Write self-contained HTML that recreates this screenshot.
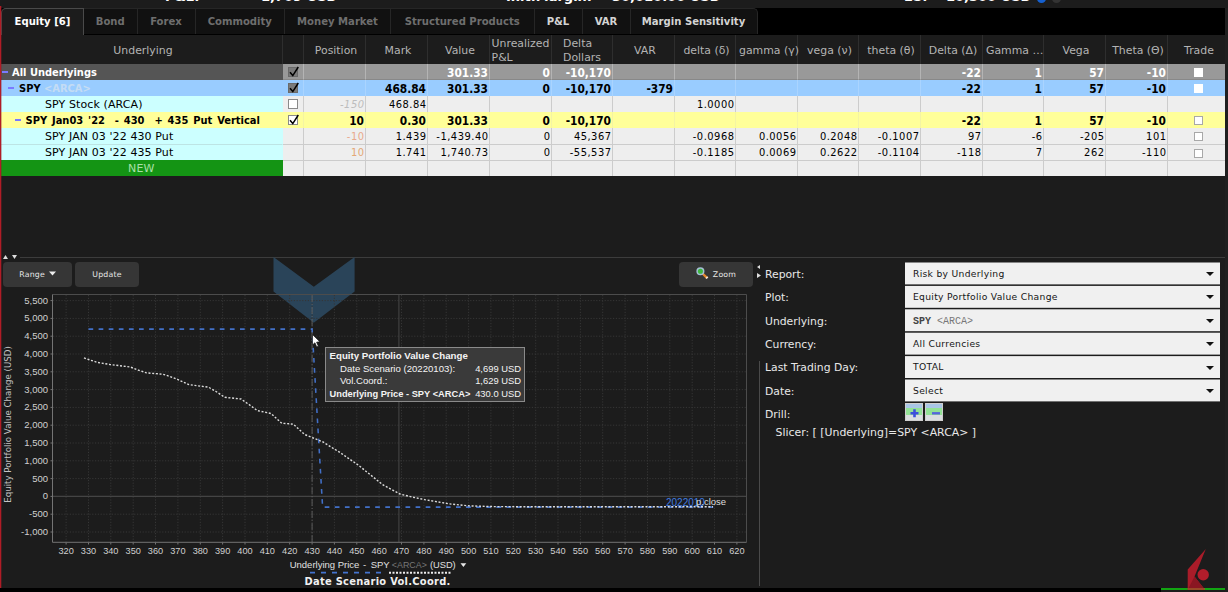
<!DOCTYPE html>
<html><head><meta charset="utf-8"><title>Risk Navigator</title>
<style>
html,body{margin:0;padding:0;background:#1c1c1c;}
body{width:1228px;height:592px;position:relative;overflow:hidden;font-family:"DejaVu Sans","Liberation Sans",sans-serif;font-size:11px;color:#fff;}
b,.bd{font-family:"DejaVu Sans Condensed","Liberation Sans",sans-serif;font-weight:bold;}
.n{font-family:"DejaVu Sans Condensed","Liberation Sans",sans-serif;}
.abs{position:absolute;}
#topstrip{left:0;top:0;width:1228px;height:8px;background:#1c1c1c;overflow:hidden;}
#topstrip span{position:absolute;top:-10px;font-weight:bold;font-size:13px;line-height:14px;color:#fff;white-space:pre;}
#redline{left:0;top:6px;width:1px;height:582px;background:#b01c26;box-shadow:1px 0 0 rgba(150,28,36,0.35);}
#tabbar{left:0;top:8px;width:1228px;height:27px;background:#000;}
.tab{position:absolute;top:0;height:26px;box-sizing:border-box;background:#111;border:1px solid #262626;border-bottom:none;border-left:none;font-family:"DejaVu Sans Condensed","Liberation Sans",sans-serif;font-weight:bold;font-size:11.2px;line-height:26px;text-align:center;color:#6e6e6e;white-space:pre;}
.tab.en{color:#d4d4d4;}
.tab.last{border-radius:0 5px 0 0;}
.tab.act{background:#1c1c1c;color:#fff;border:1px solid #4a4a4a;border-bottom:none;border-radius:5px 0 0 0;height:27px;}
#thead{left:1px;top:35px;width:1227px;height:29px;background:#1c1c1c;}
.th{position:absolute;top:0;height:29px;box-sizing:border-box;border-right:1px solid #2e2e2e;color:#b4b4b4;font-size:10.9px;line-height:13.8px;white-space:pre;overflow:hidden;}
.th.c{text-align:center;line-height:31px;padding-left:3px;overflow:visible;}
.th.l{display:flex;justify-content:center;padding-top:2px;}
.th.l span{text-align:left;display:block;}
.row{position:absolute;left:1px;width:1227px;height:16px;}
.cell{position:absolute;top:0;height:16px;box-sizing:border-box;font-family:"DejaVu Sans Condensed","Liberation Sans",sans-serif;font-size:11px;line-height:16px;white-space:pre;overflow:hidden;text-align:right;padding-right:1px;padding-top:1px;color:#000;}
.cell.first{text-align:left;padding-right:0;font-family:"DejaVu Sans","Liberation Sans",sans-serif;}
.r1 .cell.first,.r2 .cell.first,.r4 .cell.first{font-family:"DejaVu Sans Condensed","Liberation Sans",sans-serif;}
.r1 .cell,.r2 .cell,.r4 .cell{font-size:11.8px;}
.rd .cell{letter-spacing:0.5px;padding-right:0.5px;}
.rd .cell.first{letter-spacing:0.1px;}
.r1 .cell.first,.r2 .cell.first,.r4 .cell.first{font-size:11px;}
.r1 .cell{background:#999;color:#fff;font-weight:bold;border-right:1px solid #b4b4b4;border-bottom:1px solid #888;}
.r1 .cell.first{background:#555;border-right:1px solid #555;border-bottom:1px solid #555;}
.r2 .cell{background:#99ccff;font-weight:bold;border-right:1px solid #aad4ff;}
.r2 .cell.first{border-right:1px solid #99ccff;}
.r4 .cell{background:#ffff99;font-weight:bold;border-right:1px solid #f4f4a4;}
.r4 .cell.first{border-right:1px solid #ffff99;}
.rd .cell{background:#eee;border-right:1px solid #ccc;}
.rd.bt .cell{border-top:1px solid #ccc;padding-top:0;}
.rd.bt .cell.first{border-top:1px solid #bde4e4;}
.rd .cell.first{background:#ccffff;border-right:1px solid #ccffff;}
.rd.rn .cell.first{background:#149414;border-color:#149414;color:#a8e0a8;text-align:center;}
.cb{position:absolute;left:5px;top:3px;width:8px;height:8px;box-sizing:content-box;border:1px solid #8a8a8a;background:#fff;}
.cb.dk{background:#7a7a7a;border-color:#6a6a6a;}
.cb svg{position:absolute;left:0;top:-2px;}
.tcb{position:absolute;left:26px;top:4px;width:9px;height:9px;background:#fff;border:1px solid #a8a8a8;box-sizing:border-box;}
.r1 .tcb,.r2 .tcb{border-color:#fff;}
.exp{position:absolute;top:7px;width:6px;height:2px;background:#7a7aff;}
.btn{position:absolute;background:#363636;border-radius:4px;color:#e6e6e6;font-family:"DejaVu Sans","Liberation Sans",sans-serif;font-size:7.8px;letter-spacing:0.2px;text-align:center;white-space:pre;}
.lbl{position:absolute;left:765px;font-size:10.8px;line-height:14px;color:#e8e8e8;white-space:pre;}
.dd{position:absolute;left:905px;width:315px;height:22px;color:#151515;font-size:9.2px;letter-spacing:0.3px;line-height:22px;box-sizing:border-box;padding-left:8px;white-space:pre;}
.dd:after{content:"";position:absolute;right:6px;top:9.5px;border-left:4px solid transparent;border-right:4px solid transparent;border-top:4px solid #111;}
</style></head><body>
<div id="topstrip" class="abs"><span style="left:165px">P&amp;L:</span><span style="left:261px">1,709 USD</span><span style="left:506px">Init.Margin:</span><span style="left:612px">30,010.00 USD</span><span style="left:904px">ES:</span><span style="left:946px">10,500 USD</span><i class="abs" style="left:1037px;top:-6px;width:9px;height:9px;border-radius:5px;background:#1560d0"></i><i class="abs" style="left:1052px;top:-6px;width:9px;height:9px;border-radius:5px;background:#333"></i></div>
<div id="tabbar" class="abs"><div class="tab act" style="left:1px;width:83px">Equity [6]</div><div class="tab " style="left:84px;width:53.5px">Bond</div><div class="tab " style="left:137.5px;width:58.0px">Forex</div><div class="tab " style="left:195.5px;width:89.5px">Commodity</div><div class="tab " style="left:285px;width:106px">Money Market</div><div class="tab " style="left:391px;width:143.5px">Structured Products</div><div class="tab en" style="left:534.5px;width:48.0px">P&amp;L</div><div class="tab en" style="left:582.5px;width:48.0px">VAR</div><div class="tab en last" style="left:630.5px;width:127.0px">Margin Sensitivity</div></div>
<div id="thead" class="abs"><div class="th c" style="left:0px;width:282px">Underlying</div><div class="th c" style="left:282px;width:21px"></div><div class="th c" style="left:303px;width:62px">Position</div><div class="th c" style="left:365px;width:62px">Mark</div><div class="th c" style="left:427px;width:62px">Value</div><div class="th l" style="left:489px;width:62px"><span>Unrealized
P&amp;L</span></div><div class="th l" style="left:551px;width:61px"><span>Delta
Dollars</span></div><div class="th c" style="left:612px;width:62px">VAR</div><div class="th c" style="left:674px;width:61px">delta (δ)</div><div class="th c" style="left:735px;width:62px">gamma (γ)</div><div class="th c" style="left:797px;width:61px">vega (ν)</div><div class="th c" style="left:858px;width:62px">theta (θ)</div><div class="th c" style="left:920px;width:62px">Delta (Δ)</div><div class="th c" style="left:982px;width:61px">Gamma …</div><div class="th c" style="left:1043px;width:62px">Vega</div><div class="th c" style="left:1105px;width:62px">Theta (Θ)</div><div class="th c" style="left:1167px;width:60px">Trade</div></div>
<div class="row r1" style="top:64px"><div class="cell first" style="left:0;width:282px"><i class="exp" style="left:1px"></i><span style="padding-left:11px">All Underlyings</span></div><div class="cell" style="left:282px;width:21px"><span class="cb dk"><svg width="12" height="12" viewBox="0 0 12 12"><path d="M1 6.2 L3.8 9.6 L9.3 1" fill="none" stroke="#000" stroke-width="1.5"/></svg></span></div><div class="cell" style="left:303px;width:62px"></div><div class="cell" style="left:365px;width:62px"></div><div class="cell" style="left:427px;width:62px">301.33</div><div class="cell" style="left:489px;width:62px">0</div><div class="cell" style="left:551px;width:61px">-10,170</div><div class="cell" style="left:612px;width:62px"></div><div class="cell" style="left:674px;width:61px"></div><div class="cell" style="left:735px;width:62px"></div><div class="cell" style="left:797px;width:61px"></div><div class="cell" style="left:858px;width:62px"></div><div class="cell" style="left:920px;width:62px">-22</div><div class="cell" style="left:982px;width:61px">1</div><div class="cell" style="left:1043px;width:62px">57</div><div class="cell" style="left:1105px;width:62px">-10</div><div class="cell" style="left:1167px;width:60px;border-right:none"><span class="tcb"></span></div></div>
<div class="row r2" style="top:80px"><div class="cell first" style="left:0;width:282px"><i class="exp" style="left:7px"></i><span style="padding-left:18px">SPY <span style="color:#c4dcf4">&lt;ARCA&gt;</span></span></div><div class="cell" style="left:282px;width:21px"><span class="cb dk"><svg width="12" height="12" viewBox="0 0 12 12"><path d="M1 6.2 L3.8 9.6 L9.3 1" fill="none" stroke="#000" stroke-width="1.5"/></svg></span></div><div class="cell" style="left:303px;width:62px"></div><div class="cell" style="left:365px;width:62px">468.84</div><div class="cell" style="left:427px;width:62px">301.33</div><div class="cell" style="left:489px;width:62px">0</div><div class="cell" style="left:551px;width:61px">-10,170</div><div class="cell" style="left:612px;width:62px">-379</div><div class="cell" style="left:674px;width:61px"></div><div class="cell" style="left:735px;width:62px"></div><div class="cell" style="left:797px;width:61px"></div><div class="cell" style="left:858px;width:62px"></div><div class="cell" style="left:920px;width:62px">-22</div><div class="cell" style="left:982px;width:61px">1</div><div class="cell" style="left:1043px;width:62px">57</div><div class="cell" style="left:1105px;width:62px">-10</div><div class="cell" style="left:1167px;width:60px;border-right:none"><span class="tcb"></span></div></div>
<div class="row rd" style="top:96px"><div class="cell first" style="left:0;width:282px"><span style="padding-left:44px">SPY Stock (ARCA)</span></div><div class="cell" style="left:282px;width:21px"><span class="cb"></span></div><div class="cell" style="left:303px;width:62px"><i style="color:#bdbdbd">-150</i></div><div class="cell" style="left:365px;width:62px">468.84</div><div class="cell" style="left:427px;width:62px"></div><div class="cell" style="left:489px;width:62px"></div><div class="cell" style="left:551px;width:61px"></div><div class="cell" style="left:612px;width:62px"></div><div class="cell" style="left:674px;width:61px">1.0000</div><div class="cell" style="left:735px;width:62px"></div><div class="cell" style="left:797px;width:61px"></div><div class="cell" style="left:858px;width:62px"></div><div class="cell" style="left:920px;width:62px"></div><div class="cell" style="left:982px;width:61px"></div><div class="cell" style="left:1043px;width:62px"></div><div class="cell" style="left:1105px;width:62px"></div><div class="cell" style="left:1167px;width:60px;border-right:none"></div></div>
<div class="row r4" style="top:112px"><div class="cell first" style="left:0;width:282px"><i class="exp" style="left:14px"></i><span style="padding-left:24.5px;word-spacing:1.5px">SPY Jan03 '22  - 430  + 435 Put Vertical</span></div><div class="cell" style="left:282px;width:21px"><span class="cb"><svg width="12" height="12" viewBox="0 0 12 12"><path d="M1 6.2 L3.8 9.6 L9.3 1" fill="none" stroke="#000" stroke-width="1.5"/></svg></span></div><div class="cell" style="left:303px;width:62px">10</div><div class="cell" style="left:365px;width:62px">0.30</div><div class="cell" style="left:427px;width:62px">301.33</div><div class="cell" style="left:489px;width:62px">0</div><div class="cell" style="left:551px;width:61px">-10,170</div><div class="cell" style="left:612px;width:62px"></div><div class="cell" style="left:674px;width:61px"></div><div class="cell" style="left:735px;width:62px"></div><div class="cell" style="left:797px;width:61px"></div><div class="cell" style="left:858px;width:62px"></div><div class="cell" style="left:920px;width:62px">-22</div><div class="cell" style="left:982px;width:61px">1</div><div class="cell" style="left:1043px;width:62px">57</div><div class="cell" style="left:1105px;width:62px">-10</div><div class="cell" style="left:1167px;width:60px;border-right:none"><span class="tcb"></span></div></div>
<div class="row rd" style="top:128px"><div class="cell first" style="left:0;width:282px"><span style="padding-left:44px">SPY JAN 03 '22 430 Put</span></div><div class="cell" style="left:282px;width:21px"></div><div class="cell" style="left:303px;width:62px"><span style="color:#e9a98c">-10</span></div><div class="cell" style="left:365px;width:62px">1.439</div><div class="cell" style="left:427px;width:62px">-1,439.40</div><div class="cell" style="left:489px;width:62px">0</div><div class="cell" style="left:551px;width:61px">45,367</div><div class="cell" style="left:612px;width:62px"></div><div class="cell" style="left:674px;width:61px">-0.0968</div><div class="cell" style="left:735px;width:62px">0.0056</div><div class="cell" style="left:797px;width:61px">0.2048</div><div class="cell" style="left:858px;width:62px">-0.1007</div><div class="cell" style="left:920px;width:62px">97</div><div class="cell" style="left:982px;width:61px">-6</div><div class="cell" style="left:1043px;width:62px">-205</div><div class="cell" style="left:1105px;width:62px">101</div><div class="cell" style="left:1167px;width:60px;border-right:none"><span class="tcb"></span></div></div>
<div class="row rd bt" style="top:144px"><div class="cell first" style="left:0;width:282px"><span style="padding-left:44px">SPY JAN 03 '22 435 Put</span></div><div class="cell" style="left:282px;width:21px"></div><div class="cell" style="left:303px;width:62px"><span style="color:#e3a877">10</span></div><div class="cell" style="left:365px;width:62px">1.741</div><div class="cell" style="left:427px;width:62px">1,740.73</div><div class="cell" style="left:489px;width:62px">0</div><div class="cell" style="left:551px;width:61px">-55,537</div><div class="cell" style="left:612px;width:62px"></div><div class="cell" style="left:674px;width:61px">-0.1185</div><div class="cell" style="left:735px;width:62px">0.0069</div><div class="cell" style="left:797px;width:61px">0.2622</div><div class="cell" style="left:858px;width:62px">-0.1104</div><div class="cell" style="left:920px;width:62px">-118</div><div class="cell" style="left:982px;width:61px">7</div><div class="cell" style="left:1043px;width:62px">262</div><div class="cell" style="left:1105px;width:62px">-110</div><div class="cell" style="left:1167px;width:60px;border-right:none"><span class="tcb"></span></div></div>
<div class="row rd bt rn" style="top:160px"><div class="cell first" style="left:0;width:282px">NEW</div><div class="cell" style="left:282px;width:21px"></div><div class="cell" style="left:303px;width:62px"></div><div class="cell" style="left:365px;width:62px"></div><div class="cell" style="left:427px;width:62px"></div><div class="cell" style="left:489px;width:62px"></div><div class="cell" style="left:551px;width:61px"></div><div class="cell" style="left:612px;width:62px"></div><div class="cell" style="left:674px;width:61px"></div><div class="cell" style="left:735px;width:62px"></div><div class="cell" style="left:797px;width:61px"></div><div class="cell" style="left:858px;width:62px"></div><div class="cell" style="left:920px;width:62px"></div><div class="cell" style="left:982px;width:61px"></div><div class="cell" style="left:1043px;width:62px"></div><div class="cell" style="left:1105px;width:62px"></div><div class="cell" style="left:1167px;width:60px;border-right:none"></div></div>
<div class="abs" style="left:20px;top:257px;width:1208px;height:1px;background:#3c3c3c"></div><svg class="abs" style="left:3px;top:254px" width="16" height="6"><path d="M0 5 L2.5 1 L5 5Z M9 1 L14 1 L11.5 5Z" fill="#ddd"/></svg><div class="btn" style="left:3px;top:262px;width:69px;height:25px;line-height:25px">Range <svg width="7" height="5" viewBox="0 0 7 5" style="vertical-align:1px;margin-left:1px"><path d="M0 0.5H7L3.5 4.5Z" fill="#eee"/></svg></div><div class="btn" style="left:75px;top:262px;width:64px;height:25px;line-height:25px">Update</div><div class="btn" style="left:679px;top:262px;width:74px;height:25px;line-height:25px"><svg width="14" height="14" viewBox="0 0 14 14" style="vertical-align:-3.5px;margin-right:3px"><path d="M6.5 6.5 L11 10.8" stroke="#e8892a" stroke-width="2.3" stroke-linecap="butt"/><path d="M10.3 10.1 L11.5 11.3" stroke="#f4e8d8" stroke-width="2.3"/><circle cx="4.4" cy="4.2" r="3.3" fill="#3fb83f" stroke="#a4c0d4" stroke-width="1.5"/></svg>Zoom</div><svg class="abs" style="left:0;top:250px" width="760" height="342" viewBox="0 250 760 342" font-family="Liberation Sans, sans-serif"><path d="M273.5 257 L273.5 291.5 L313.8 322.7 L354.6 291.5 L354.6 257 L313.8 286.8 Z" fill="#2a4459"/><path d="M66.1 295V542 M88.5 295V542 M110.8 295V542 M133.2 295V542 M155.5 295V542 M177.9 295V542 M200.3 295V542 M222.6 295V542 M245.0 295V542 M267.3 295V542 M289.7 295V542 M312.1 295V542 M334.4 295V542 M356.8 295V542 M379.1 295V542 M401.5 295V542 M423.9 295V542 M446.2 295V542 M468.6 295V542 M490.9 295V542 M513.3 295V542 M535.7 295V542 M558.0 295V542 M580.4 295V542 M602.7 295V542 M625.1 295V542 M647.5 295V542 M669.8 295V542 M692.2 295V542 M714.5 295V542 M736.9 295V542 M53 532.0H746 M53 514.2H746 M53 496.4H746 M53 478.6H746 M53 460.8H746 M53 443.0H746 M53 425.2H746 M53 407.4H746 M53 389.6H746 M53 371.8H746 M53 354.0H746 M53 336.2H746 M53 318.4H746 M53 300.6H746" stroke="#363636" stroke-width="1" stroke-dasharray="1.2 1.6" fill="none"/><path d="M53 496.4H746 M398.9 295V542" stroke="#444" stroke-width="1.1" fill="none"/><path d="M52.5 294.5H746.5V542.3" stroke="#4c4c4c" stroke-width="1" fill="none"/><path d="M52.5 294.5V542.3H746.5" stroke="#747474" stroke-width="1" fill="none"/><path d="M66.1 542.5v2 M88.5 542.5v2 M110.8 542.5v2 M133.2 542.5v2 M155.5 542.5v2 M177.9 542.5v2 M200.3 542.5v2 M222.6 542.5v2 M245.0 542.5v2 M267.3 542.5v2 M289.7 542.5v2 M312.1 542.5v2 M334.4 542.5v2 M356.8 542.5v2 M379.1 542.5v2 M401.5 542.5v2 M423.9 542.5v2 M446.2 542.5v2 M468.6 542.5v2 M490.9 542.5v2 M513.3 542.5v2 M535.7 542.5v2 M558.0 542.5v2 M580.4 542.5v2 M602.7 542.5v2 M625.1 542.5v2 M647.5 542.5v2 M669.8 542.5v2 M692.2 542.5v2 M714.5 542.5v2 M736.9 542.5v2 M50.5 532.0h2 M50.5 514.2h2 M50.5 496.4h2 M50.5 478.6h2 M50.5 460.8h2 M50.5 443.0h2 M50.5 425.2h2 M50.5 407.4h2 M50.5 389.6h2 M50.5 371.8h2 M50.5 354.0h2 M50.5 336.2h2 M50.5 318.4h2 M50.5 300.6h2" stroke="#747474" stroke-width="1" fill="none"/><path d="M312.1 295V542" stroke="#6a6a6a" stroke-width="0.8" stroke-dasharray="7 2 1 2" fill="none"/><path d="M88.5 329.1 L312.1 329.1 L322.6 507.1 L714.5 507.1" stroke="#4270c8" stroke-width="1.55" stroke-dasharray="4.7 5.4" fill="none"/><path d="M84.0 357.9 L88.6 359.5 L97.7 362.5 L110.0 364.5 L130.3 367.0 L138.0 370.0 L146.6 372.9 L162.9 374.2 L170.0 376.5 L177.5 379.4 L188.9 384.6 L208.5 387.2 L216.0 391.5 L224.8 397.3 L241.0 399.0 L249.0 404.5 L257.3 410.6 L271.0 413.5 L281.8 423.3 L293.2 424.1 L304.6 434.5 L322.5 441.7 L340.0 452.5 L358.3 465.1 L382.7 484.7 L400.0 494.0 L412.0 497.0 L424.7 499.6 L449.2 503.9 L469.5 505.9 L494.0 506.6 L520.0 506.7 L713.0 506.7" stroke="#dcdcdc" stroke-width="1.4" stroke-dasharray="2 1.7" fill="none"/><text x="48" y="535.0" font-size="9.5" fill="#d0d0d0" text-anchor="end">-1,000</text><text x="48" y="517.2" font-size="9.5" fill="#d0d0d0" text-anchor="end">-500</text><text x="48" y="499.4" font-size="9.5" fill="#d0d0d0" text-anchor="end">0</text><text x="48" y="481.6" font-size="9.5" fill="#d0d0d0" text-anchor="end">500</text><text x="48" y="463.8" font-size="9.5" fill="#d0d0d0" text-anchor="end">1,000</text><text x="48" y="446.0" font-size="9.5" fill="#d0d0d0" text-anchor="end">1,500</text><text x="48" y="428.2" font-size="9.5" fill="#d0d0d0" text-anchor="end">2,000</text><text x="48" y="410.4" font-size="9.5" fill="#d0d0d0" text-anchor="end">2,500</text><text x="48" y="392.6" font-size="9.5" fill="#d0d0d0" text-anchor="end">3,000</text><text x="48" y="374.8" font-size="9.5" fill="#d0d0d0" text-anchor="end">3,500</text><text x="48" y="357.0" font-size="9.5" fill="#d0d0d0" text-anchor="end">4,000</text><text x="48" y="339.2" font-size="9.5" fill="#d0d0d0" text-anchor="end">4,500</text><text x="48" y="321.4" font-size="9.5" fill="#d0d0d0" text-anchor="end">5,000</text><text x="48" y="303.6" font-size="9.5" fill="#d0d0d0" text-anchor="end">5,500</text><text x="66.1" y="553.9" font-size="9.2" fill="#d0d0d0" text-anchor="middle">320</text><text x="88.5" y="553.9" font-size="9.2" fill="#d0d0d0" text-anchor="middle">330</text><text x="110.8" y="553.9" font-size="9.2" fill="#d0d0d0" text-anchor="middle">340</text><text x="133.2" y="553.9" font-size="9.2" fill="#d0d0d0" text-anchor="middle">350</text><text x="155.5" y="553.9" font-size="9.2" fill="#d0d0d0" text-anchor="middle">360</text><text x="177.9" y="553.9" font-size="9.2" fill="#d0d0d0" text-anchor="middle">370</text><text x="200.3" y="553.9" font-size="9.2" fill="#d0d0d0" text-anchor="middle">380</text><text x="222.6" y="553.9" font-size="9.2" fill="#d0d0d0" text-anchor="middle">390</text><text x="245.0" y="553.9" font-size="9.2" fill="#d0d0d0" text-anchor="middle">400</text><text x="267.3" y="553.9" font-size="9.2" fill="#d0d0d0" text-anchor="middle">410</text><text x="289.7" y="553.9" font-size="9.2" fill="#d0d0d0" text-anchor="middle">420</text><text x="312.1" y="553.9" font-size="9.2" fill="#d0d0d0" text-anchor="middle">430</text><text x="334.4" y="553.9" font-size="9.2" fill="#d0d0d0" text-anchor="middle">440</text><text x="356.8" y="553.9" font-size="9.2" fill="#d0d0d0" text-anchor="middle">450</text><text x="379.1" y="553.9" font-size="9.2" fill="#d0d0d0" text-anchor="middle">460</text><text x="401.5" y="553.9" font-size="9.2" fill="#d0d0d0" text-anchor="middle">470</text><text x="423.9" y="553.9" font-size="9.2" fill="#d0d0d0" text-anchor="middle">480</text><text x="446.2" y="553.9" font-size="9.2" fill="#d0d0d0" text-anchor="middle">490</text><text x="468.6" y="553.9" font-size="9.2" fill="#d0d0d0" text-anchor="middle">500</text><text x="490.9" y="553.9" font-size="9.2" fill="#d0d0d0" text-anchor="middle">510</text><text x="513.3" y="553.9" font-size="9.2" fill="#d0d0d0" text-anchor="middle">520</text><text x="535.7" y="553.9" font-size="9.2" fill="#d0d0d0" text-anchor="middle">530</text><text x="558.0" y="553.9" font-size="9.2" fill="#d0d0d0" text-anchor="middle">540</text><text x="580.4" y="553.9" font-size="9.2" fill="#d0d0d0" text-anchor="middle">550</text><text x="602.7" y="553.9" font-size="9.2" fill="#d0d0d0" text-anchor="middle">560</text><text x="625.1" y="553.9" font-size="9.2" fill="#d0d0d0" text-anchor="middle">570</text><text x="647.5" y="553.9" font-size="9.2" fill="#d0d0d0" text-anchor="middle">580</text><text x="669.8" y="553.9" font-size="9.2" fill="#d0d0d0" text-anchor="middle">590</text><text x="692.2" y="553.9" font-size="9.2" fill="#d0d0d0" text-anchor="middle">600</text><text x="714.5" y="553.9" font-size="9.2" fill="#d0d0d0" text-anchor="middle">610</text><text x="736.9" y="553.9" font-size="9.2" fill="#d0d0d0" text-anchor="middle">620</text><text transform="translate(10.5,424.5) rotate(-90)" font-size="8.7" fill="#c4c4c4" text-anchor="middle" font-family="DejaVu Sans, sans-serif">Equity Portfolio Value Change (USD)</text><text y="568" font-size="9.5" fill="#e0e0e0"><tspan x="289.7">Underlying Price</tspan><tspan x="363">-</tspan><tspan x="370.7">SPY</tspan><tspan x="391.8" fill="#777" font-size="8.9">&lt;ARCA&gt;</tspan><tspan x="429.9" font-size="9.3">(USD)</tspan></text><path d="M460.5 563.3H466.3L463.4 567Z" fill="#e8e8e8"/><text x="666" y="506" font-size="10" fill="#3f7be0">2022010</text><text x="696" y="505" font-size="9.5" fill="#ddd">p.close</text><path d="M310 572.7H386" stroke="#4474d0" stroke-width="1.8" stroke-dasharray="5 6" fill="none"/><path d="M389 572.7H450.5" stroke="#eee" stroke-width="2" stroke-dasharray="2 1.5" fill="none"/><text x="304.5" y="584.5" font-size="11" font-weight="bold" fill="#f0f0f0" letter-spacing="0.28" font-family="DejaVu Sans Condensed, sans-serif">Date Scenario Vol.Coord.</text><rect x="325.5" y="347.5" width="199" height="54" fill="#3a3a3a" stroke="#8a8a8a" stroke-width="1"/><text font-size="9.6" fill="#f4f4f4"><tspan x="329.5" y="359" font-weight="bold" font-size="9.7">Equity Portfolio Value Change</tspan><tspan x="340" y="371.5">Date Scenario (20220103):</tspan><tspan x="521" y="371.5" text-anchor="end" font-size="9.4">4,699 USD</tspan><tspan x="340" y="384.2">Vol.Coord.:</tspan><tspan x="521" y="384.2" text-anchor="end" font-size="9.4">1,629 USD</tspan><tspan x="329.5" y="396.8" font-weight="bold" font-size="9.3">Underlying Price - SPY &lt;ARCA&gt;</tspan><tspan x="521" y="396.8" text-anchor="end" font-size="9.4">430.0 USD</tspan></text><path d="M312.5 334.5 L312.5 345 L314.9 342.8 L316.7 346.9 L318.4 346.2 L316.6 342.2 L319.9 341.8 Z" fill="#fff" stroke="#111" stroke-width="0.7"/></svg>
<div class="abs" style="left:759px;top:361px;width:1px;height:225px;background:#4a4a4a"></div><svg class="abs" style="left:755.5px;top:265px" width="6" height="14"><path d="M4 0 L4 4 L1 2Z M1 8 L1 13 L5 10.5Z" fill="#ddd"/></svg><div class="lbl" style="top:268.0px">Report:</div><div class="lbl" style="top:291.3px">Plot:</div><div class="lbl" style="top:314.6px">Underlying:</div><div class="lbl" style="top:337.9px">Currency:</div><div class="lbl" style="top:361.2px">Last Trading Day:</div><div class="lbl" style="top:384.5px">Date:</div><div class="lbl" style="top:407.8px">Drill:</div><svg class="abs" style="left:0;top:0" width="1228" height="592"><rect x="905" y="262.5" width="315" height="21.9" fill="#f0f0f0"/><rect x="905" y="285.9" width="315" height="21.9" fill="#f0f0f0"/><rect x="905" y="309.3" width="315" height="21.9" fill="#f0f0f0"/><rect x="905" y="332.7" width="315" height="21.9" fill="#f0f0f0"/><rect x="905" y="356.1" width="315" height="21.9" fill="#f0f0f0"/><rect x="905" y="379.5" width="315" height="21.9" fill="#f0f0f0"/></svg><div class="dd" style="top:262.5px">Risk by Underlying</div><div class="dd" style="top:285.9px">Equity Portfolio Value Change</div><div class="dd" style="top:309.3px"><span style="font-family:'Liberation Mono',monospace;font-size:10px;letter-spacing:0;position:relative;top:1px"><span style="color:#444;font-weight:bold">SPY</span> <span style="color:#777">&lt;ARCA&gt;</span></span></div><div class="dd" style="top:332.7px">All Currencies</div><div class="dd" style="top:356.1px">TOTAL</div><div class="dd" style="top:379.5px">Select</div><div class="lbl" style="left:775.5px;top:426px;font-size:10.9px">Slicer: [ [Underlying]=SPY &lt;ARCA&gt; ]</div><svg class="abs" style="left:905px;top:403px" width="40" height="18"><g id="dr"><rect x="0.5" y="0.5" width="17" height="17" fill="#dadfe0" stroke="#cfcfcf"/><rect x="1" y="1" width="16" height="4" fill="#a9c6e6"/><rect x="1" y="5" width="16" height="7" fill="#93e296"/></g><path d="M5.5 10.3H13.5M9.5 6.3V14.3" stroke="#3c4fdc" stroke-width="2.6"/><use href="#dr" x="20"/><path d="M27 10.3H35" stroke="#5566dd" stroke-width="2.4"/></svg><div class="abs" style="left:0;top:588px;width:1161px;height:4px;background:#000"></div><div class="abs" style="left:1161px;top:588px;width:64px;height:2px;background:#12a512"></div><div class="abs" style="left:1225px;top:8px;width:3px;height:584px;background:#1f1f1f;z-index:5"></div><svg class="abs" style="left:1180px;top:545px" width="40" height="47" viewBox="1180 545 40 47"><path d="M1205.8 548.9 L1187.7 569.6 L1187.7 589.8 L1205 589.8 L1194.5 576.6 Z" fill="#a91c29"/><path d="M1194.5 576.6 L1187.7 589.8 L1205 589.8 Z" fill="#8a1622"/><path d="M1187.7 588 H1205 V590 H1187.7Z" fill="#a0602a" opacity="0.7"/><circle cx="1203.2" cy="574.8" r="5.7" fill="#b21d2b"/></svg><div id="redline" class="abs"></div>
</body></html>
